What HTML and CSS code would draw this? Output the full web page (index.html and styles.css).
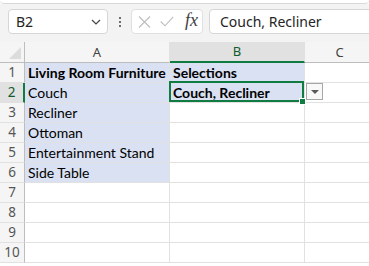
FILE: index.html
```html
<!DOCTYPE html>
<html lang="en">
<head>
  <meta charset="UTF-8" />
  <title>Data Validation - Multi Select</title>
  <link rel="stylesheet" href="styles.css">
</head>
<body>

  <!-- Ribbon edge -->
  <div class="ribbon-edge"></div>

  <!-- Formula bar -->
  <div class="formula-bar">
    <div class="name-box">
      <span>B2</span>
      <svg class="chevron" width="10" height="6" viewBox="0 0 10 6"><path d="M1 1 L5 5 L9 1" fill="none" stroke="#424242" stroke-width="1.2"/></svg>
    </div>
    <div class="dots"><i></i><i></i><i></i></div>
    <div class="fx-box">
      <svg width="13" height="12" viewBox="0 0 13 12"><path d="M1 0.5 L12 11.5 M12 0.5 L1 11.5" stroke="#bdbdbd" stroke-width="1.1" fill="none"/></svg>
      <svg width="14" height="11" viewBox="0 0 14 11"><path d="M0.8 5.5 L5 9.8 L13.2 0.8" stroke="#bdbdbd" stroke-width="1.1" fill="none"/></svg>
      <span class="fx">fx</span>
    </div>
    <div class="formula-input">Couch, Recliner</div>
  </div>

  <!-- Sheet grid -->
  <div class="sheet">
    <div class="corner"></div>
    <div class="col-head">A</div>
    <div class="col-head active">B</div>
    <div class="col-head">C</div>

    <div class="row-head">1</div>
    <div class="cell hl bold">Living Room Furniture</div>
    <div class="cell hl bold">Selections</div>
    <div class="cell"></div>

    <div class="row-head active">2</div>
    <div class="cell hl">Couch</div>
    <div class="cell hl bold current">Couch, Recliner</div>
    <div class="cell dd-cell"><span class="dropdown"></span></div>

    <div class="row-head">3</div>
    <div class="cell hl">Recliner</div>
    <div class="cell"></div>
    <div class="cell"></div>

    <div class="row-head">4</div>
    <div class="cell hl">Ottoman</div>
    <div class="cell"></div>
    <div class="cell"></div>

    <div class="row-head">5</div>
    <div class="cell hl">Entertainment Stand</div>
    <div class="cell"></div>
    <div class="cell"></div>

    <div class="row-head">6</div>
    <div class="cell hl">Side Table</div>
    <div class="cell"></div>
    <div class="cell"></div>

    <div class="row-head">7</div>
    <div class="cell"></div>
    <div class="cell"></div>
    <div class="cell"></div>

    <div class="row-head">8</div>
    <div class="cell"></div>
    <div class="cell"></div>
    <div class="cell"></div>

    <div class="row-head">9</div>
    <div class="cell"></div>
    <div class="cell"></div>
    <div class="cell"></div>

    <div class="row-head">10</div>
    <div class="cell"></div>
    <div class="cell"></div>
    <div class="cell"></div>
  </div>

</body>
</html>
```

FILE: styles.css
```css
body {
  margin: 0;
  width: 369px;
  height: 266px;
  overflow: hidden;
  background: #fff;
  font-family: 'Noto Sans', sans-serif;
}

.ribbon-edge {
  height: 3px;
  background: #fff;
  border-bottom: 1px solid #d9d9d9;
  border-radius: 0 0 6px 6px;
}

.formula-bar {
  height: 38px;
  box-sizing: border-box;
  padding: 5px 0 0 8px;
  background: #f3f3f3;
  display: flex;
  align-items: flex-start;
}

.name-box {
  width: 100px;
  height: 25px;
  box-sizing: border-box;
  background: #fff;
  border: 1px solid #d6d6d6;
  border-radius: 4px;
  display: flex;
  align-items: center;
  justify-content: space-between;
  padding: 0 6px 0 7px;
  font-size: 14px;
  color: #242424;
}

.chevron {
  margin-top: 1px;
}

.dots {
  width: 23px;
  height: 25px;
  display: flex;
  flex-direction: column;
  align-items: center;
  justify-content: center;
  gap: 2px;
}

.dots i {
  width: 2px;
  height: 2px;
  background: #424242;
  border-radius: 1px;
}

.fx-box {
  width: 72px;
  height: 25px;
  box-sizing: border-box;
  background: #fff;
  border: 1px solid #e0e0e0;
  border-radius: 4px;
  display: flex;
  align-items: center;
  padding-left: 6px;
  gap: 9px;
}

.fx {
  font-family: 'Liberation Serif', serif;
  font-style: italic;
  font-size: 18px;
  color: #424242;
  margin-left: 2px;
  margin-top: -2px;
}

.formula-input {
  flex: 1;
  margin-left: 6px;
  margin-right: -8px;
  height: 25px;
  box-sizing: border-box;
  background: #fff;
  border: 1px solid #d6d6d6;
  border-radius: 4px;
  padding-left: 10px;
  font-size: 14px;
  line-height: 23px;
  color: #242424;
}

.sheet {
  display: grid;
  grid-template-columns: 25px 145px 135px 70px;
  grid-template-rows: 21px repeat(10, 20px);
  font-family: 'Lato', 'Liberation Sans', sans-serif;
  font-size: 14px;
  color: #000;
}

.sheet > div {
  box-sizing: border-box;
}

.corner {
  background: #f5f5f5;
  border-right: 1px solid #bdbdbd;
  border-bottom: 1px solid #bdbdbd;
  position: relative;
}

.corner::after {
  content: "";
  position: absolute;
  right: 3px;
  bottom: 3px;
  border-left: 12px solid transparent;
  border-bottom: 12px solid #dcdcdc;
}

.col-head {
  background: #f5f5f5;
  border-right: 1px solid #e1e1e1;
  border-bottom: 1px solid #bdbdbd;
  text-align: center;
  font-family: 'Noto Sans', sans-serif;
  font-size: 13px;
  line-height: 20px;
  color: #444;
}

.col-head.active {
  background: #e1e1e1;
  border-bottom: 2px solid #107c41;
  color: #0e5c2f;
  line-height: 19px;
}

.row-head {
  background: #f5f5f5;
  border-right: 1px solid #bdbdbd;
  border-bottom: 1px solid #e1e1e1;
  text-align: center;
  font-family: 'Noto Sans', sans-serif;
  font-size: 13.5px;
  line-height: 19px;
  color: #555;
}

.row-head.active {
  background: #e1e1e1;
  border-right: 2px solid #107c41;
  color: #0e5c2f;
}

.cell {
  border-right: 1px solid #e1e1e1;
  border-bottom: 1px solid #e1e1e1;
  padding: 0 3px;
  line-height: 20px;
  white-space: nowrap;
  overflow: hidden;
}

.cell.hl {
  background: #dae1f3;
}

.cell.bold {
  font-weight: bold;
}

.current {
  position: relative;
  overflow: visible;
}

.current::before {
  content: "";
  position: absolute;
  left: -1px;
  right: 0;
  top: -2px;
  bottom: 0;
  border: 2px solid #107c41;
}

.current::after {
  content: "";
  position: absolute;
  right: -2px;
  bottom: -3px;
  width: 7px;
  height: 7px;
  box-sizing: border-box;
  background: #107c41;
  border: 1px solid #fff;
  z-index: 2;
}

.dd-cell {
  position: relative;
}

.dropdown {
  position: absolute;
  left: 1px;
  top: 0;
  width: 17px;
  height: 17px;
  box-sizing: border-box;
  background: #f8f8f8;
  border: 1px solid #a6a6a6;
}

.dropdown::after {
  content: "";
  position: absolute;
  left: 4px;
  top: 6px;
  border-left: 4px solid transparent;
  border-right: 4px solid transparent;
  border-top: 4px solid #595959;
}
```
